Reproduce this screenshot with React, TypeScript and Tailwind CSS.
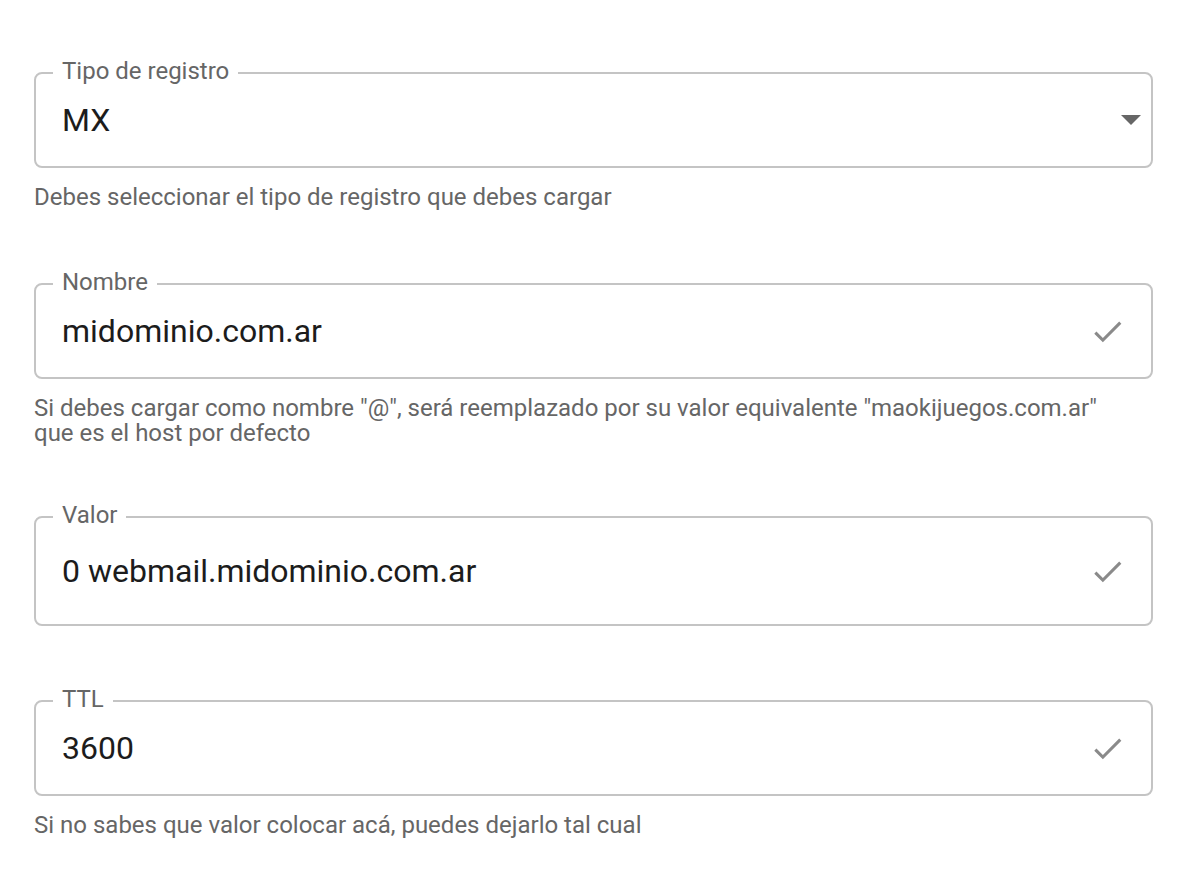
function CheckIcon() {
  return (
    <svg viewBox="0 0 24 24" className="h-[37px] w-[37px] fill-[#8a8a8a]" aria-hidden="true">
      <path d="M9 16.17 4.83 12l-1.42 1.41L9 19 21 7l-1.41-1.41z" />
    </svg>
  );
}

function ArrowDown() {
  return (
    <svg viewBox="0 0 20 10" className="h-[10px] w-[20px] fill-[#666666]" aria-hidden="true">
      <path d="M0 0 10 10 20 0z" />
    </svg>
  );
}

type FieldProps = {
  label: string;
  value: string;
  select?: boolean;
  tall?: boolean;
  className?: string;
};

function OutlinedField({ label, value, select, tall, className = "" }: FieldProps) {
  return (
    <div
      className={`relative flex items-center rounded-[8px] border-2 border-[#c4c4c4] pl-[26px] ${
        tall ? "h-[110px]" : "h-[96px]"
      } ${select ? "pr-[10px]" : "pr-[25px]"} ${className}`}
    >
      <span className="absolute -top-[3px] left-[17px] -translate-y-1/2 bg-white px-[9px] text-[24px] leading-[26px] text-[#666666]">
        {label}
      </span>
      <span className="flex-1 text-[32px] leading-[38px] text-[#1c1c1c]">{value}</span>
      {select ? <ArrowDown /> : <CheckIcon />}
    </div>
  );
}

function Helper({ children }: { children: React.ReactNode }) {
  return (
    <p className="mt-[17px] max-w-[1075px] text-[24px] leading-[25px] text-[#666666]">{children}</p>
  );
}

export default function App() {
  return (
    <div
      className="min-h-[878px] w-full bg-white pt-[72px] pl-[34px]"
      style={{ fontFamily: "Roboto, 'Liberation Sans', sans-serif" }}
    >
      <div className="w-[1119px]">
        <OutlinedField label="Tipo de registro" value="MX" select />
        <Helper>Debes seleccionar el tipo de registro que debes cargar</Helper>

        <OutlinedField className="mt-[73px]" label="Nombre" value="midominio.com.ar" />
        <Helper>
          Si debes cargar como nombre "@", será reemplazado por su valor equivalente
          "maokijuegos.com.ar" que es el host por defecto
        </Helper>

        <OutlinedField className="mt-[70px]" label="Valor" value="0 webmail.midominio.com.ar" tall />

        <OutlinedField className="mt-[74px]" label="TTL" value="3600" />
        <Helper>Si no sabes que valor colocar acá, puedes dejarlo tal cual</Helper>
      </div>
    </div>
  );
}
